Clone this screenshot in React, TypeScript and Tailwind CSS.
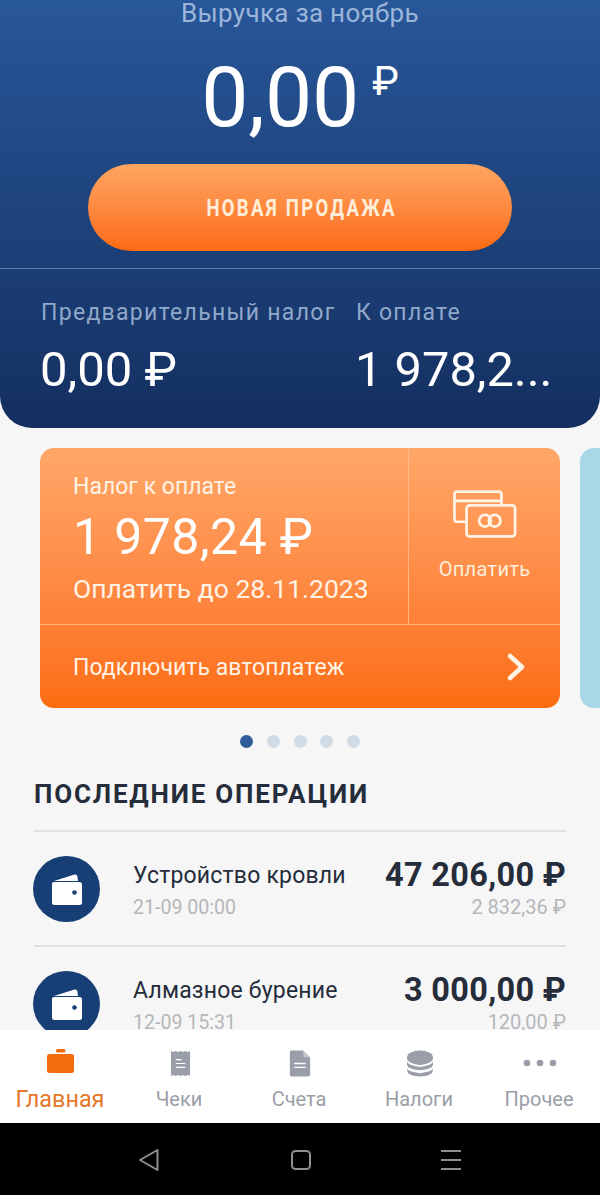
import React from "react";

const font = "font-['Roboto',sans-serif]";

const WalletIcon = () => (
  <svg viewBox="0 0 30 31" className="w-[30px] h-[31px]">
    <path d="M2 7 L22.5 0.6 Q25 0.2 25.4 2.5 L26 7 Z" fill="#fff" />
    <path d="M0 9.5 Q0 8 2 8 L27.5 8 Q30 8 30 10.5 L30 28.5 Q30 31 27.5 31 L2.5 31 Q0 31 0 28.5 Z" fill="#fff" />
    <circle cx="22.5" cy="18.5" r="2.3" fill="#173f75" />
  </svg>
);

const Operation = ({ title, date, amount, tax }: { title: string; date: string; amount: string; tax: string }) => (
  <div className="flex items-start border-t-2 border-[#e0e1e3] pt-[24px] h-[115px] shrink-0">
    <div className="w-[67px] h-[66px] -ml-[1px] rounded-full bg-[#173f75] flex items-center justify-center shrink-0">
      <WalletIcon />
    </div>
    <div className="ml-[33px] flex-1">
      <div className="text-[23px] leading-[30px] text-[#252c3a] tracking-[0.2px] mt-[5px]">{title}</div>
      <div className="text-[19.6px] leading-[26px] text-[#b5b7ba] mt-[4px]">{date}</div>
    </div>
    <div className="text-right">
      <div className="text-[32.5px] leading-[38px] font-bold text-[#252c3a] tracking-[0.3px]">{amount}</div>
      <div className="text-[20px] leading-[26px] text-[#b5b7ba]">{tax}</div>
    </div>
  </div>
);

const tabs = [
  {
    label: "Главная",
    active: true,
    icon: (
      <svg viewBox="0 0 27 24" className="w-[27px] h-[24px] -translate-y-[2px]">
        <rect x="9" y="0" width="9.5" height="3.5" rx="1.5" fill="#f26c0d" />
        <rect x="0" y="5" width="27" height="19" rx="2.5" fill="#f26c0d" />
      </svg>
    ),
  },
  {
    label: "Чеки",
    icon: (
      <svg viewBox="0 0 22 28" className="w-[21px] h-[27px]">
        <path d="M1 1 L3.5 2 L6 1 L8.5 2 L11 1 L13.5 2 L16 1 L18.5 2 L21 1 L21 27 L18.5 26 L16 27 L13.5 26 L11 27 L8.5 26 L6 27 L3.5 26 L1 27 Z" fill="#9a9ea8" />
        <path d="M6 10 H12 M6 14 H16 M6 18 H16" stroke="#fff" strokeWidth="1.3" />
      </svg>
    ),
  },
  {
    label: "Счета",
    icon: (
      <svg viewBox="0 0 22 28" className="w-[22px] h-[27px]">
        <path d="M2 0.5 H14 L21.5 8 V25.5 Q21.5 27.5 19.5 27.5 H2 Q0.5 27.5 0.5 25.5 V2.5 Q0.5 0.5 2 0.5 Z" fill="#9a9ea8" />
        <path d="M14.5 0.5 V7.5 H21.5" fill="#c4c7cd" />
        <path d="M5 14 H17 M5 18 H17" stroke="#fff" strokeWidth="1.3" />
      </svg>
    ),
  },
  {
    label: "Налоги",
    icon: (
      <svg viewBox="0 0 28 28" className="w-[28px] h-[27px]">
        <ellipse cx="14" cy="8" rx="13.5" ry="7.5" fill="#9a9ea8" />
        <path d="M0.5 12 Q1 16 14 17.5 Q27 16 27.5 12 V15 Q27 20 14 21 Q1 20 0.5 15 Z" fill="#9a9ea8" />
        <path d="M0.5 19 Q1 22.5 14 24 Q27 22.5 27.5 19 V21 Q27 27 14 27.5 Q1 27 0.5 21 Z" fill="#9a9ea8" />
      </svg>
    ),
  },
  {
    label: "Прочее",
    icon: (
      <svg viewBox="0 0 34 8" className="w-[34px] h-[8px]">
        <circle cx="4" cy="4" r="3.3" fill="#9a9ea8" />
        <circle cx="17" cy="4" r="3.3" fill="#9a9ea8" />
        <circle cx="30" cy="4" r="3.3" fill="#9a9ea8" />
      </svg>
    ),
  },
];

export default function App() {
  return (
    <div className={`w-[600px] h-[1195px] flex flex-col overflow-hidden bg-[#f6f6f7] ${font}`}>
      <header className="h-[428px] shrink-0 rounded-b-[32px] bg-gradient-to-b from-[#28579a] to-[#142f60] flex flex-col overflow-hidden">
        <div className="h-[269px] shrink-0 border-b border-[#5f7ca6] flex flex-col items-center">
          <div className="text-[26px] leading-[26px] text-[#9cb6d9] tracking-[0.3px]">Выручка за ноябрь</div>
          <div className="flex items-start mt-[25px] h-[93px] text-white">
            <span className="text-[84px] leading-[93px]">0,00</span>
            <span className="text-[40px] leading-[40px] ml-[13px] mt-[11px]">₽</span>
          </div>
          <button className="mt-[20px] pl-[3px] w-[424px] h-[87px] rounded-full bg-gradient-to-b from-[#ffa55f] to-[#fb6a0e] text-[#ffeeda] text-[24px] font-bold tracking-[3px]">
            <span className="inline-block whitespace-nowrap scale-x-[0.77]">НОВАЯ ПРОДАЖА</span>
          </button>
        </div>
        <div className="flex pl-[40px] pt-[30px]">
          <div className="w-[316px]">
            <div className="pl-[1px] text-[23px] leading-[28px] text-[#90a8cb] tracking-[1.3px] whitespace-nowrap">Предварительный налог</div>
            <div className="text-[49px] leading-[56px] text-white mt-[15px]">0,00 ₽</div>
          </div>
          <div>
            <div className="text-[23px] leading-[28px] text-[#90a8cb] tracking-[1.25px]">К оплате</div>
            <div className="-ml-[1px] text-[48.8px] leading-[56px] text-white mt-[15px]">1 978,2...</div>
          </div>
        </div>
      </header>

      <main className="flex-1 min-h-0 overflow-hidden">
        <div className="flex gap-[20px] pl-[40px] pt-[20px]">
          <div className="w-[520px] h-[260px] shrink-0 rounded-[14px] bg-gradient-to-b from-[#ffa768] to-[#fc6c0c] flex flex-col overflow-hidden">
            <div className="h-[177px] shrink-0 flex border-b border-[#ffae72]">
              <div className="w-[369px] border-r border-[#ffb883] pl-[33px] pt-[25px] text-[#fff3e6]">
                <div className="text-[23px] leading-[28px]">Налог к оплате</div>
                <div className="text-[50px] leading-[56px] text-white mt-[8px] tracking-[0.4px]">1 978,24 ₽</div>
                <div className="text-[26.5px] leading-[32px] mt-[8px]">Оплатить до 28.11.2023</div>
              </div>
              <div className="flex-1 flex flex-col items-center pt-[41px] text-[#ffeeda]">
                <svg viewBox="0 0 66 50" className="w-[64px] h-[50px]" fill="none" stroke="#fff3e6" strokeWidth="2.8">
                  <path d="M14 33 H4 Q1.5 33 1.5 30 V5 Q1.5 2 4 2 H47 Q50 2 50 5 V16" />
                  <path d="M1.5 11.5 H50" />
                  <rect x="14" y="16" width="50" height="32" rx="3" />
                  <circle cx="33" cy="32" r="6" />
                  <circle cx="43" cy="32" r="6" />
                </svg>
                <div className="text-[20px] leading-[26px] mt-[17px] tracking-[0.3px]">Оплатить</div>
              </div>
            </div>
            <div className="flex-1 flex items-center justify-between pl-[33px] pr-[35px] text-[#fff3e6]">
              <span className="text-[23px] leading-[28px] tracking-[0.05px] translate-y-[1px]">Подключить автоплатеж</span>
              <svg viewBox="0 0 18 28" className="w-[18px] h-[28px]" fill="none" stroke="#fff3e6" strokeWidth="4.5" strokeLinecap="round" strokeLinejoin="round">
                <path d="M3 3 L15 14 L3 25" />
              </svg>
            </div>
          </div>
          <div className="w-[520px] h-[260px] shrink-0 rounded-[14px] bg-[#a8d8e5]" />
        </div>

        <div className="flex justify-center gap-[13.75px] mt-[27px]">
          <span className="w-[13px] h-[13px] rounded-full bg-[#2f5c98]" />
          <span className="w-[13px] h-[13px] rounded-full bg-[#d0dce5]" />
          <span className="w-[13px] h-[13px] rounded-full bg-[#d0dce5]" />
          <span className="w-[13px] h-[13px] rounded-full bg-[#d0dce5]" />
          <span className="w-[13px] h-[13px] rounded-full bg-[#d0dce5]" />
        </div>

        <div className="px-[34px]">
          <h2 className="text-[26px] leading-[32px] font-bold text-[#252c3a] tracking-[1.8px] mt-[30px] mb-[20px]">ПОСЛЕДНИЕ ОПЕРАЦИИ</h2>
          <Operation title="Устройство кровли" date="21-09 00:00" amount="47 206,00 ₽" tax="2 832,36 ₽" />
          <Operation title="Алмазное бурение" date="12-09 15:31" amount="3 000,00 ₽" tax="120,00 ₽" />
        </div>
      </main>

      <nav className="h-[93px] shrink-0 bg-white grid grid-cols-5">
        {tabs.map((t) => (
          <div key={t.label} className="flex flex-col items-center">
            <div className="h-[28px] mt-[19px] flex items-center justify-center">{t.icon}</div>
            <div className={t.active ? "text-[23.4px] leading-[26px] mt-[9px] text-[#e5772a]" : "text-[20px] leading-[26px] mt-[9px] text-[#9a9ea8] -translate-x-[1px]"}>{t.label}</div>
          </div>
        ))}
      </nav>

      <div className="h-[72px] shrink-0 bg-black flex items-center justify-center gap-[130px] pt-[2px]">
        <svg viewBox="0 0 22 24" className="w-[22px] h-[24px]" fill="none" stroke="#8f8f8f" strokeWidth="2" strokeLinejoin="round">
          <path d="M2 12 L19.5 2 V22 Z" />
        </svg>
        <svg viewBox="0 0 22 22" className="w-[22px] h-[22px]" fill="none" stroke="#8f8f8f" strokeWidth="2">
          <rect x="2" y="2" width="18" height="18" rx="3.5" />
        </svg>
        <svg viewBox="0 0 22 22" className="w-[22px] h-[22px] -ml-[2px]" fill="none" stroke="#8f8f8f" strokeWidth="2">
          <path d="M1 2 H21 M1 11 H21 M1 20 H21" />
        </svg>
      </div>
    </div>
  );
}
